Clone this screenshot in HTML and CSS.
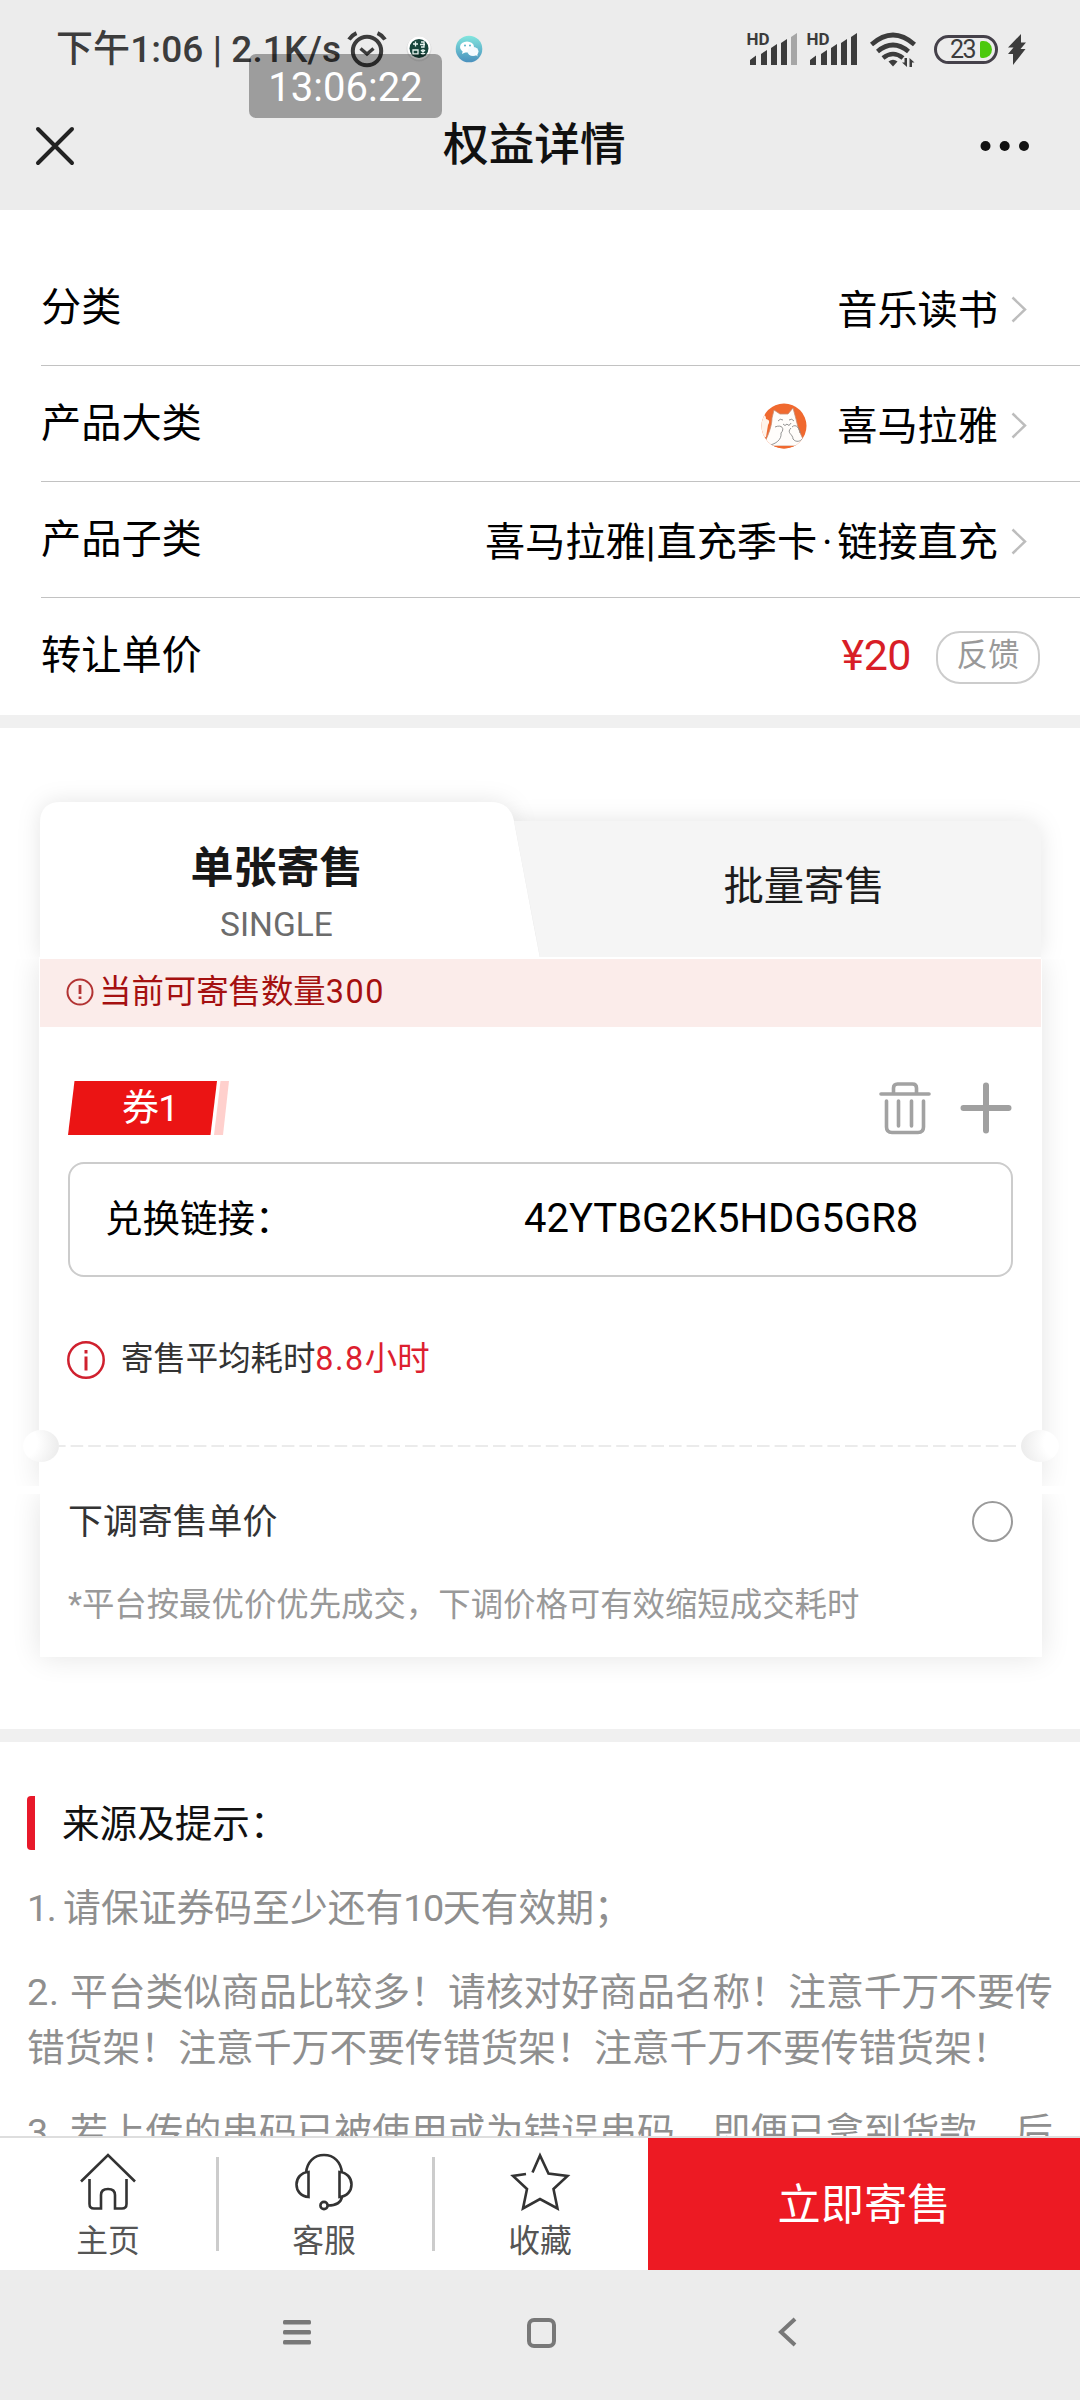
FILE: index.html
```html
<!DOCTYPE html>
<html lang="zh-CN">
<head>
<meta charset="utf-8">
<title>权益详情</title>
<link rel="stylesheet" href="styles.css">
</head>
<body>
<div class="screen">
  <header class="top">
    <div class="status">
      <span class="status-text">下午1:06 | 2.1K/s</span>
      <svg class="alarm" width="40" height="36" viewBox="0 0 40 36" fill="none" stroke="#3c3c3c">
        <circle cx="20" cy="20" r="14.2" stroke-width="4"/>
        <path d="M13.5 17.5l6.5 5.5 6.5-5.5" stroke-width="3.4"/>
        <path d="M2 8.500C4 5.500 6.500 3.500 9.500 2.200M38 8.500C36 5.500 33.500 3.500 30.500 2.200" stroke-width="4"/>
      </svg>
      <svg class="app-dot" width="26" height="28" viewBox="0 0 26 28">
        <circle cx="13" cy="14" r="12.500" fill="#dcdcdc"/><circle cx="13" cy="13" r="11.500" fill="#fff"/><circle cx="13" cy="13.500" r="9.500" fill="#17453c"/>
        <path d="M7 9h5M9.500 6.500v5M15 7h3v5h-3M14 9.500h5M7 15h5v4H7zM15 15l4 4M19 15l-4 4M17 14v6" stroke="#e7f5f0" stroke-width="1.300" fill="none"/>
      </svg>
      <svg class="app-chat" width="28" height="28" viewBox="0 0 28 28">
        <defs><linearGradient id="sky" x1="0" y1="0" x2="0" y2="1"><stop offset="0" stop-color="#82e6de"/><stop offset="1" stop-color="#4a90bd"/></linearGradient></defs>
        <circle cx="14" cy="14" r="13.300" fill="url(#sky)"/>
        <ellipse cx="12" cy="12" rx="7" ry="5.600" fill="#fff"/><ellipse cx="18" cy="16.500" rx="5.500" ry="4.500" fill="#f4fbff"/>
        <path d="M8 15l-1 4 4-2zM20 19l2.500 2.500-.3-4z" fill="#fff"/>
        <circle cx="10" cy="10.500" r="1" fill="#58b4c8"/><circle cx="15" cy="10.500" r="1" fill="#58b4c8"/>
      </svg>
      <svg class="signal" width="120" height="36" viewBox="0 0 120 36">
        <g fill="#3c3c3c">
          <path d="M3 34v-5l6-4.500v9.500zM14 34v-11l6-4v15zM24 34v-17l6-4v21zM34 34v-22l6-4v26z"/>
          <path fill="#a6a6a6" d="M44 34v-28l6-4v32z"/>
          <path d="M63 34v-5l6-4.500v9.500zM74 34v-11l6-4v15zM84 34v-17l6-4v21zM94 34v-22l6-4v26zM104 34v-28l6-4v32z"/>
          <text class="hd" x="-.5" y="14">HD</text><text class="hd" x="59.500" y="14">HD</text>
        </g>
      </svg>
      <svg class="wifi" width="48" height="36" viewBox="0 0 48 36" fill="none" stroke="#3c3c3c" stroke-width="4.600">
        <path d="M1.500 13.500Q23 -5.500 44.500 13.500M7.500 20.500Q23 7.500 38.500 20.500M13 27Q23 19 33 27"/>
        <path d="M18.500 30.500q4.500-3.500 9 0L23 35.500z" fill="#3c3c3c" stroke="none"/>
        <path d="M37 27v9l-5-4.500h2.500V27zM39.500 36v-9l5 4.500H42V36z" fill="#3c3c3c" stroke="none"/>
      </svg>
      <span class="battery"><span class="battery-num">23</span><span class="battery-fill"></span></span>
      <svg class="bolt" width="18" height="31" viewBox="0 0 18 31"><path d="M13 0L0 13.500h5.500L0 20h5l0 11L17.500 15h-5L18 8.500h-5z" fill="#3c3c3c"/></svg>
    </div>
    <div class="titlebar">
      <svg width="38" height="38" viewBox="0 0 38 38" stroke="#222" stroke-width="4" stroke-linecap="round"><path d="M2 2l34 34M36 2L2 36"/></svg>
      <h1>权益详情</h1>
      <svg width="50" height="12" viewBox="0 0 50 12" fill="#111"><circle cx="5.500" cy="6" r="5"/><circle cx="24.700" cy="6" r="5"/><circle cx="44" cy="6" r="5"/></svg>
    </div>
    <div class="clock">13:06:22</div>
  </header>

  <main class="page">
    <section class="list">
      <div class="row"><span class="label">分类</span><span class="value">音乐读书</span>
        <svg class="chev" width="16" height="27" viewBox="0 0 16 27"><path d="M1.500 1.500L14 13.500 1.500 25.500"/></svg></div>
      <div class="row"><span class="label">产品大类</span>
        <svg class="avatar" width="46" height="46" viewBox="0 0 46 46">
          <defs><clipPath id="round"><circle cx="23" cy="23" r="22.500"/></clipPath></defs>
          <g clip-path="url(#round)">
            <rect width="46" height="46" fill="#f0692f"/>
            <path d="M0 12q5-1 5 4 5 1 2 6l-2 12-6 2z" fill="#fff3ea"/>
            <path d="M13 7l6 4h8l5-6 3 11c2 10 5 17 10 25v2H2C8 31 11 22 11 15z" fill="#fffdfb" stroke="#c58d75" stroke-width=".8"/>
            <path d="M17 18q2-3 5-1M28 17q3-2 5 1M22 21q2 3 4 0 2 3 4-1M14 24c7-3 10 2 6 6 1 7-6 11-11 12M30 25c-5 5 2 6 2 11 3 4 8 2 9 0M31 24c4-4 8 2 8 6" fill="none" stroke="#888" stroke-width=".9"/>
            <path d="M10 43h26v3H10z" fill="#f0692f"/>
          </g>
        </svg>
        <span class="value">喜马拉雅</span>
        <svg class="chev" width="16" height="27" viewBox="0 0 16 27"><path d="M1.500 1.500L14 13.500 1.500 25.500"/></svg></div>
      <div class="row"><span class="label">产品子类</span><span class="value">喜马拉雅<span class="bar">|</span>直充季卡<span class="mid">·</span>链接直充</span>
        <svg class="chev" width="16" height="27" viewBox="0 0 16 27"><path d="M1.500 1.500L14 13.500 1.500 25.500"/></svg></div>
      <div class="row last"><span class="label">转让单价</span><span class="price">¥20</span><button class="feedback">反馈</button></div>
    </section>

    <section class="ticket">
      <div class="tabs">
        <svg class="tabs-bg" width="1002" height="157" viewBox="0 0 1002 157">
          <path class="tab-shadow" d="M470 19H982q20 0 20 20V155H470z" fill="#f5f5f5"/>
          <path class="tab-shadow" d="M1 157V21Q1 0 22 0H452Q471 0 475 19L501 157z" fill="#fff"/>
          <path d="M475 19H560V155H501z" fill="#f5f5f5"/>
          <path d="M0 155h1002v2H0z" fill="#fff"/>
        </svg>
        <div class="tab active"><b>单张寄售</b><small>SINGLE</small></div>
        <div class="tab">批量寄售</div>
      </div>
      <div class="body">
        <div class="alert">
          <svg width="28" height="28" viewBox="0 0 28 28" fill="none" stroke="#b23333"><circle cx="14" cy="14" r="12.500" stroke-width="2"/><path d="M14 7v9M14 18.500v2.500" stroke-width="2.800"/></svg>
          <span>当前可寄售数量<span class="wide">300</span></span>
        </div>
        <div class="coupon-head">
          <div class="badge">
            <svg class="badge-bg" width="163" height="54" viewBox="0 0 163 54"><path d="M6.500 0H149L142.500 54H0z" fill="#eb1414"/><path d="M152.500 0h8.500L155 54h-9z" fill="#ffd0cd"/></svg>
            <span>券1</span>
          </div>
          <svg class="trash" width="52" height="52" viewBox="0 0 52 52" fill="none" stroke="#a2a2a2" stroke-width="3.600" stroke-linecap="round">
            <path d="M2 12h48M14.500 11V6q0-4 4-4h15q4 0 4 4v5M7.500 19v26q0 5.500 5.500 5.500h26q5.500 0 5.500-5.500V19M19.500 19v25M32.500 19v25"/></svg>
          <svg width="52" height="52" viewBox="0 0 52 52" stroke="#a0a0a0" stroke-width="6" stroke-linecap="round"><path d="M3.500 26h45M26 3.500v45"/></svg>
        </div>
        <div class="field"><span class="field-label">兑换链接：</span><span class="field-value">42YTBG2K5HDG5GR8</span></div>
        <div class="info">
          <svg width="38" height="38" viewBox="0 0 38 38" fill="none" stroke="#cf202e"><circle cx="19" cy="19" r="17.700" stroke-width="2.500"/><path d="M19 15.500v14M19 9v3.500" stroke-width="3"/></svg>
          <span>寄售平均耗时<em><span class="wide">8.8</span>小时</em></span>
        </div>
        <div class="tear">
          <i class="notch left"></i>
          <svg class="dashes" width="962" height="2" viewBox="0 0 962 2"><path d="M0 1h962" stroke="#ebebeb" stroke-width="2" stroke-dasharray="12.600 5" stroke-dashoffset="6"/></svg>
          <i class="notch right"></i>
        </div>
      </div>
      <div class="lower">
        <div class="lower-row"><span>下调寄售单价</span><i class="radio"></i></div>
        <p>*平台按最优价优先成交，下调价格可有效缩短成交耗时</p>
      </div>
    </section>

    <section class="tips">
      <h2>来源及提示：</h2>
      <p><span class="num one">1. </span>请保证券码至少还有<span class="ten">10</span>天有效期；</p>
      <p><span class="num">2. </span>平台类似商品比较多！请核对好商品名称！注意千万不要传错货架！注意千万不要传错货架！注意千万不要传错货架！</p>
      <p><span class="num">3. </span>若上传的串码已被使用或为错误串码，即便已拿到货款，后</p>
    </section>
  </main>

  <footer class="actions">
    <a class="item">
      <svg width="58" height="58" viewBox="0 0 58 58"><path d="M2 28.500L29 2l27 26.500M10.500 26v25q0 4.500 4.500 4.500h7V42q0-6 7-6t7 6v13.500h7q4.500 0 4.500-4.500V26"/></svg>
      <span>主页</span></a>
    <a class="item">
      <svg width="58" height="58" viewBox="0 0 58 58"><path d="M11 20C12 9 19 2 29 2s17 7 18 18M13.500 19v25C6 43.500 1.500 38 1.500 31.500S6 19.500 13.500 19zM44.500 19v25C52 43.500 56.500 38 56.500 31.500S52 19.500 44.500 19zM47 44c-1 5-5 8.500-14 8.500"/><circle cx="29" cy="52.500" r="3.600"/></svg>
      <span>客服</span></a>
    <a class="item">
      <svg width="58" height="58" viewBox="0 0 58 58"><path d="M21.500 19.500L29 2.500l8.500 18L56.500 23 42.500 36 46.500 55.500 29 46 12 55.500 16 36 2 23l13-2"/></svg>
      <span>收藏</span></a>
    <a class="sell">立即寄售</a>
  </footer>
  <nav class="sysnav">
    <svg width="28" height="26" viewBox="0 0 28 26" fill="#787878"><rect y="0" width="28" height="4.600" rx="1.500"/><rect y="10" width="28" height="4.600" rx="1.500"/><rect y="20" width="28" height="4.600" rx="1.500"/></svg>
    <svg class="home-key" width="29" height="30" viewBox="0 0 29 30" fill="none" stroke="#787878" stroke-width="4"><rect x="2" y="2" width="25" height="26" rx="5"/></svg>
    <svg class="back-key" width="19" height="30" viewBox="0 0 19 30" fill="none" stroke="#787878" stroke-width="4"><path d="M17 2L3 15l14 13"/></svg>
  </nav>
</div>
</body>
</html>
```
FILE: styles.css
```css
* { box-sizing: border-box; }
body { margin: 0; background: #fff; }
svg { display: block; flex: none; overflow: visible; }
.screen {
  width: 1080px; height: 2400px; overflow: hidden;
  display: flex; flex-direction: column;
  font-family: Roboto, "Noto Sans CJK SC", sans-serif;
  font-weight: 400; color: #000; background: #fff;
}

/* status and title bars */
.top { position: relative; flex: none; height: 210px; background: #ececec; }
.status { display: flex; height: 98px; padding-left: 56px; align-items: center; }
.status-text {
  width: 291px; flex: none; padding-top: 2px; font-size: 37px; font-weight: 500; line-height: 50px;
  letter-spacing: .1px; color: #3c3c3c; white-space: nowrap;
}
.app-dot { margin-left: 19px; }
.app-chat { margin-left: 23px; }
.signal { margin-left: 264px; }
.hd { font-size: 17px; font-weight: 700; }
.wifi { margin-left: 3px; }
.battery {
  display: flex; align-items: center; width: 64px; height: 29px; margin-left: 16px;
  padding-left: 13px; border: 3px solid #45414a; border-radius: 15px;
}
.battery-num { width: 30px; padding-top: 1px; font-size: 25px; line-height: 28px; color: #3c3c3c; letter-spacing: -1.500px; }
.battery-fill { width: 12px; height: 17px; background: #4cc90e; border-radius: 2px 9px 9px 2px; }
.bolt { margin-left: 10px; }
.titlebar { display: flex; align-items: center; height: 95px; padding: 0 50px 0 36px; }
.titlebar h1 { margin: 1px 0 0 369px; flex: 1; font-size: 45.700px; font-weight: 500; line-height: 60px; color: #111; }
.clock {
  position: absolute; left: 249px; top: 54px; width: 193px; height: 64px;
  border-radius: 7px; background: rgba(0, 0, 0, .335); color: #fff;
  font-size: 40px; line-height: 67px; text-align: center;
}

/* product rows */
.page { flex: none; height: 1926px; overflow: hidden; }
.list { height: 518px; padding: 40px 0 0 41px; border-bottom: 13px solid #f0f0f0; }
.row { display: flex; align-items: center; height: 116px; padding-right: 53px; border-bottom: 1.500px solid #c2c2c2; font-size: 40.200px; line-height: 50px; }
.row.last { border: 0; padding-right: 40px; }
.label { flex: 1; }
.value { padding-top: 6px; margin-right: 13px; white-space: nowrap; }
.bar { margin: 0 1px 0 0; }
.mid { display: inline-block; width: 20px; text-align: center; }
.chev { margin-top: 3px; fill: none; stroke: #bdbdbd; stroke-width: 2.500; }
.avatar { margin: 5px 30px 0 0; }
.price { font-size: 43px; letter-spacing: -.500px; color: #d81e27; margin: -2px 25px 0 0; }
.feedback {
  width: 104px; height: 53px; margin-top: 3px; padding: 0 0 3px; border: 2px solid #ccc; border-radius: 24px;
  background: #fff; color: #999; font: inherit; font-size: 31.500px; line-height: 46px;
}

/* consignment card */
.ticket { height: 1014px; margin: 0; padding: 74px 38px 0 39px; border-bottom: 13px solid #f0f0f0; }
.tabs { position: relative; display: flex; height: 157px; width: 1002px; clip-path: inset(-40px -39px 0); }
.tabs-bg { position: absolute; left: 0; top: 0; }
.tab-shadow { filter: drop-shadow(0 0 11px rgba(0, 0, 0, .1)); }
.tab { position: relative; flex: 1; padding: 63px 0 0 53px; text-align: center; font-size: 40.300px; line-height: 44px; color: #1c1c1c; }
.tab.active { flex: none; width: 475px; padding: 41px 0 0; }
.tab b { display: block; font-size: 43px; font-weight: 700; line-height: 50px; color: #181818; }
.tab small { display: block; margin-top: 12px; font-size: 33.500px; line-height: 40px; color: #6c6c6c; }
.body, .lower { width: 1003px; background: #fff; box-shadow: 0 0 28px rgba(0, 0, 0, .11); }
.body { height: 527px; clip-path: inset(0 -39px); }
.alert { display: flex; align-items: center; height: 68px; margin: 0 1px; padding: 0 0 2px 26px; background: #fbecea; font-size: 32.400px; line-height: 40px; color: #a51010; }
.alert > span { margin-left: 5px; }
.wide { letter-spacing: 1.500px; }
.coupon-head { display: flex; align-items: center; margin: 54px 30px 0 29px; height: 54px; }
.badge { position: relative; width: 163px; height: 54px; margin-right: auto; }
.badge-bg { position: absolute; left: 0; top: 0; }
.badge span { position: relative; display: block; padding-left: 54px; font-size: 37px; line-height: 55px; letter-spacing: -.800px; color: #fff; }
.trash { margin-right: 29px; }
.field {
  display: flex; align-items: center; height: 115px; margin: 27px 29px 0; padding: 0 0 2px 35px;
  border: 2px solid #ccc; border-radius: 16px;
}
.field-label { width: 419px; font-size: 37.500px; line-height: 50px; }
.field-value { font-size: 40px; line-height: 50px; }
.info { display: flex; align-items: center; height: 38px; margin: 64px 0 0 28px; font-size: 32.400px; line-height: 38px; color: #333; }
.info > span { margin: -3px 0 0 16px; }
.info em { font-style: normal; color: #dd1f30; }
.tear { display: flex; align-items: center; height: 32px; margin: 51px -17px 0 -16px; }
.notch { flex: none; width: 36px; height: 32px; border-radius: 50%; }
.notch.left { background: radial-gradient(circle at 0 40%, #fff 35%, #e8e8e8 100%); }
.notch.right { width: 38px; background: radial-gradient(circle at 100% 40%, #fff 35%, #e8e8e8 100%); }
.lower { width: 1002px; height: 163px; margin: 8px 0 0 1px; clip-path: inset(0 -39px -40px); padding: 0 29px 0 28px; }
.lower-row { display: flex; justify-content: space-between; align-items: center; height: 56px; font-size: 34.900px; line-height: 44px; color: #333; }
.lower-row span { padding-top: 1px; }
.radio { width: 41px; height: 41px; margin-top: -1px; border: 2px solid #9a9a9a; border-radius: 50%; }
.lower p { margin: 33px 0 0; font-size: 32.400px; line-height: 44px; color: #999; white-space: nowrap; }

/* tips */
.tips { padding: 54px 20px 0 27px; }
.tips h2 { height: 54px; margin: 0 0 30px; padding-left: 35px; font-size: 37.600px; font-weight: 400; line-height: 56px; color: #111; background: linear-gradient(#e8192a, #e8192a) 0 0 / 8px 54px no-repeat; border-radius: 4px; }
.tips p { margin: 0 0 28px; font-size: 37.800px; line-height: 56px; color: #8f8f8f; }
.num { letter-spacing: .800px; }
.num.one { letter-spacing: -1.500px; }
.ten { letter-spacing: -1.500px; }

/* bottom actions */
.actions { display: flex; flex: none; height: 134px; border-top: 2px solid #dedede; background: #fff; }
.item { position: relative; width: 216px; padding-top: 15px; display: flex; flex-direction: column; align-items: center; font-size: 31.800px; line-height: 40px; color: #555; }
.item + .item { background: linear-gradient(#ccc, #ccc) 0 19px / 3px 94px no-repeat; }
.item svg { fill: none; stroke: #333; stroke-width: 2.600; }
.item span { margin-top: 10px; }
.sell { flex: 1; background: #ed1a23; color: #fff; font-size: 43.200px; line-height: 135px; height: 132px; text-align: center; }
.sysnav { flex: 1; display: flex; align-items: flex-start; padding: 50px 283px 0; background: #ececec; }
.home-key { margin: -2px 0 0 216px; }
.back-key { margin: -3px 0 0 222px; }
```
